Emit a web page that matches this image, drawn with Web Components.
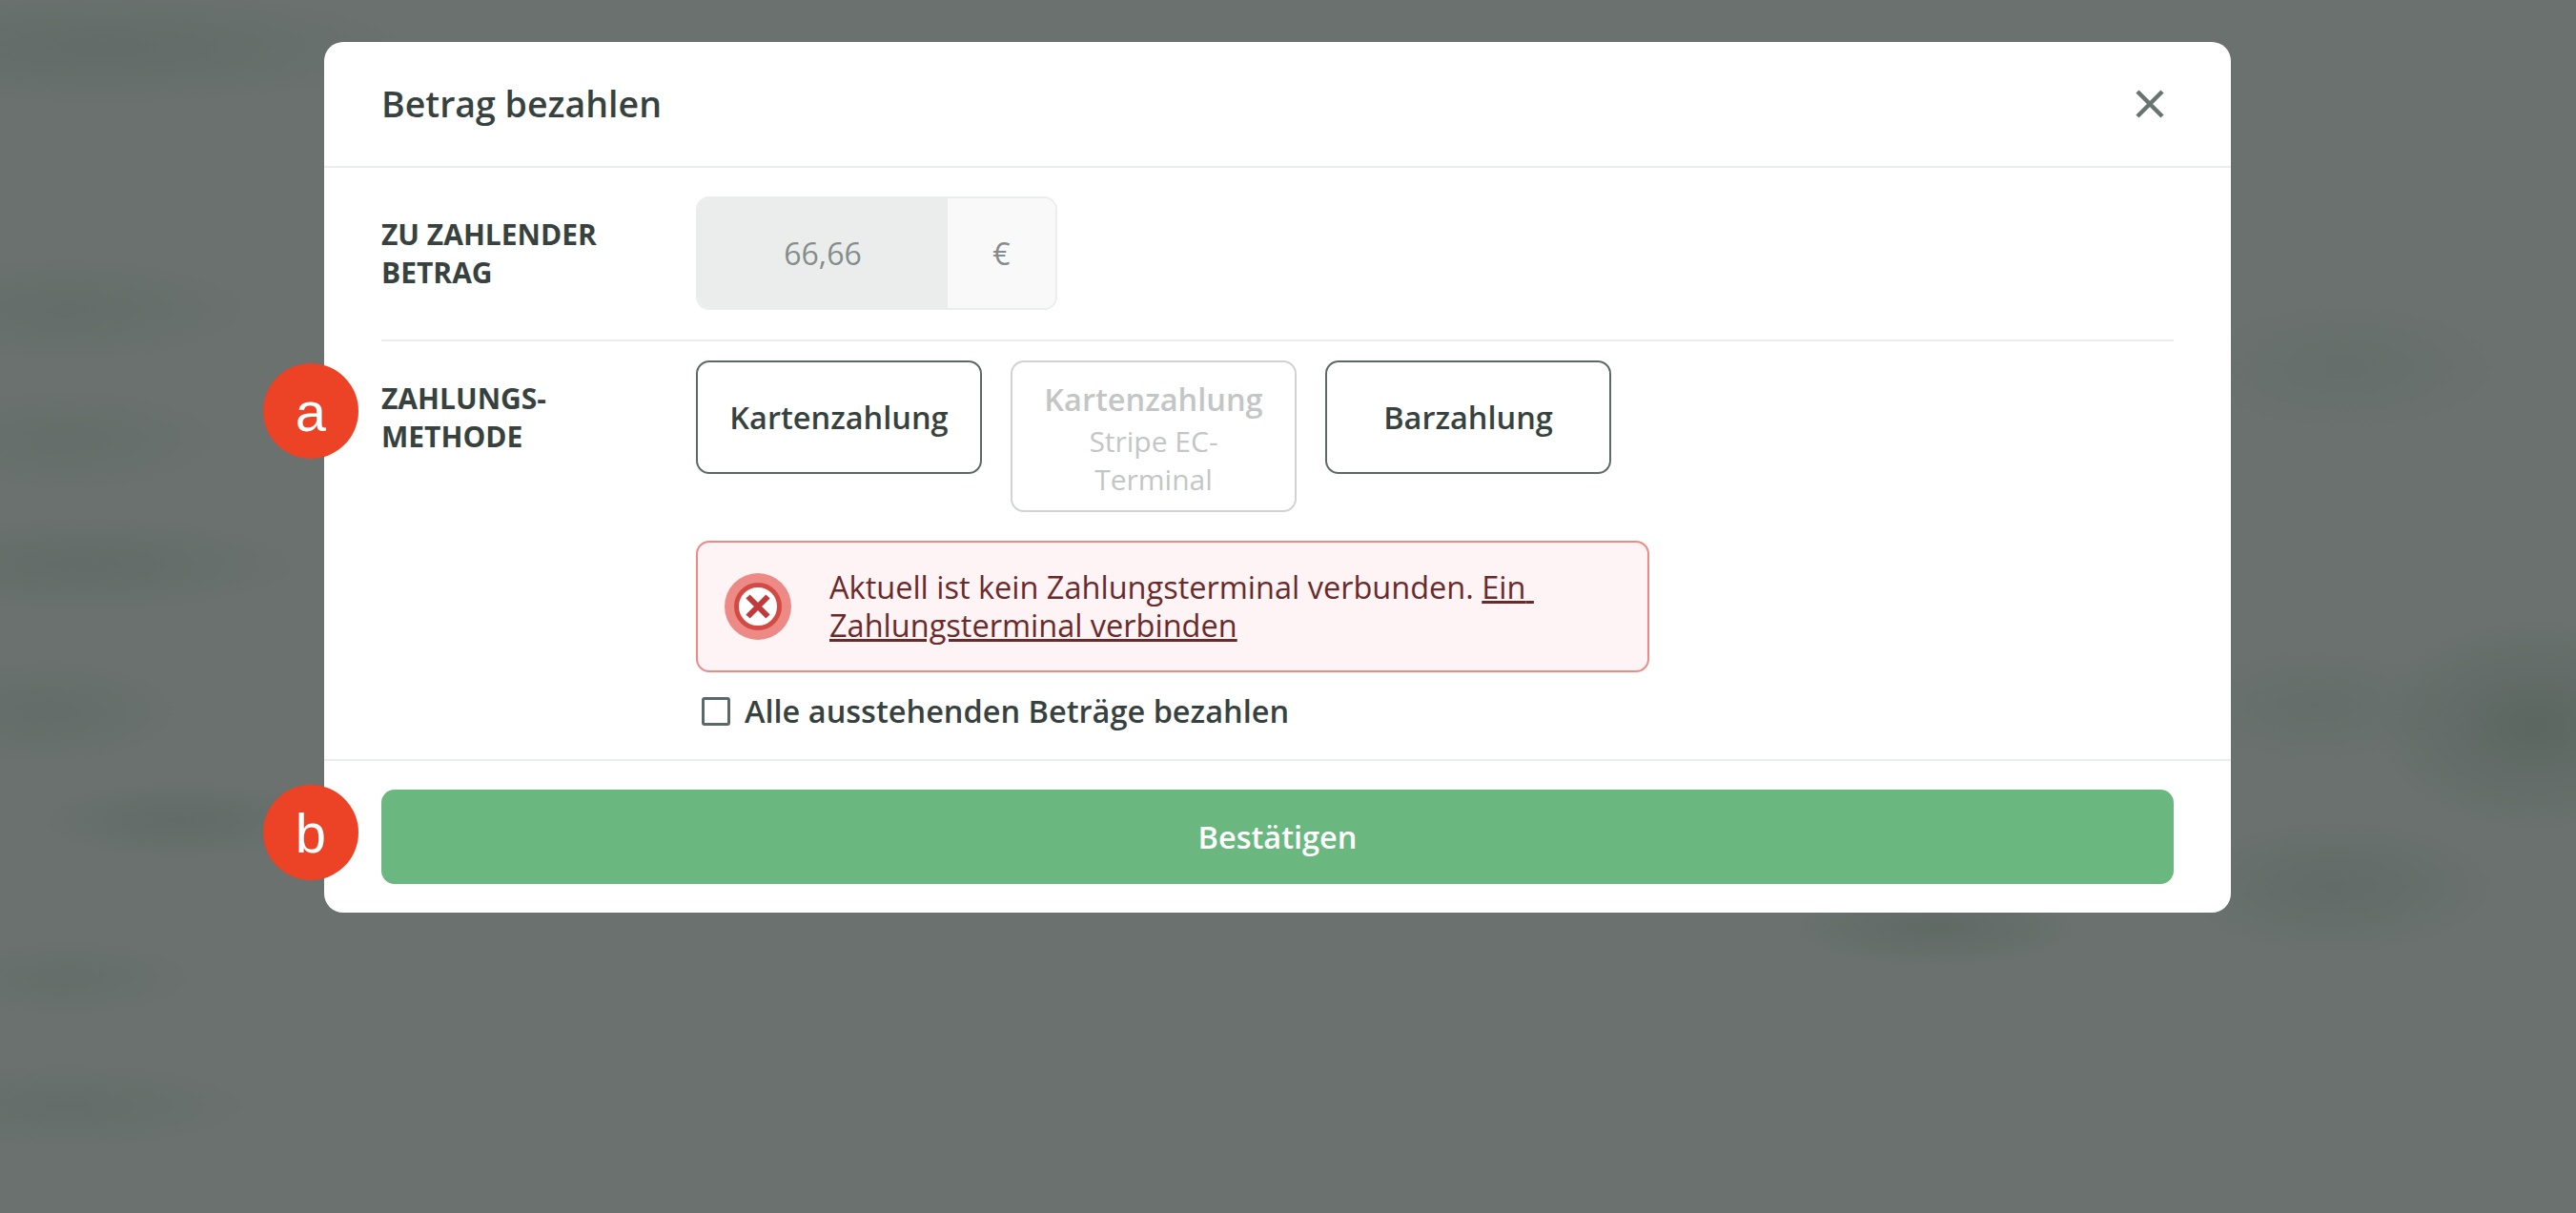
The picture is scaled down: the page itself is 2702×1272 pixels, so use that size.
<!DOCTYPE html>
<html lang="de">
<head>
<meta charset="utf-8">
<title>Betrag bezahlen</title>
<style>
  html, body { margin: 0; height: 100%; }
  body { font-family: 'Open Sans', 'Liberation Sans', sans-serif; overflow: hidden; }
</style>
</head>
<body>
<pay-backdrop>
  <pay-dialog heading="Betrag bezahlen">
    <form-row label="Zu zahlender Betrag" first>
      <amount-input value="66,66" unit="€"></amount-input>
    </form-row>
    <form-row label="Zahlungs-<br>methode">
      <div style="display:flex;gap:30px;align-items:flex-start">
        <method-button>Kartenzahlung</method-button>
        <method-button disabled sub="Stripe EC-Terminal">Kartenzahlung</method-button>
        <method-button>Barzahlung</method-button>
      </div>
      <error-alert>Aktuell ist kein Zahlungsterminal verbunden. <a href="#" style="white-space:pre-wrap">Ein Zahlungsterminal verbinden</a></error-alert>
      <check-box>Alle ausstehenden Beträge bezahlen</check-box>
    </form-row>
    <primary-button slot="footer">Bestätigen</primary-button>
    <call-out slot="overlay" style="top:337px">a</call-out>
    <call-out slot="overlay" style="top:779px">b</call-out>
  </pay-dialog>
</pay-backdrop>

<script>
function define(name, html, setup) {
  customElements.define(name, class extends HTMLElement {
    connectedCallback() {
      if (this.shadowRoot) return;
      let root = this.attachShadow({ mode: 'open' });
      root.innerHTML = html;
      if (setup) setup(this, root);
    }
  });
}

define('pay-backdrop', `
<style>
  :host {
    display: block;
    height: 1272px;
    padding: 44px 0 0 340px;
    box-sizing: border-box;
    background-color: #6a716e;
    background-image:
      radial-gradient(ellipse 170px 110px at 2660px 760px, rgba(88,100,94,.8), transparent),
      radial-gradient(ellipse 170px 70px at 2450px 930px, rgba(90,101,96,.5), transparent),
      radial-gradient(ellipse 150px 60px at 2430px 740px, rgba(92,103,98,.35), transparent),
      radial-gradient(ellipse 170px 70px at 2460px 385px, rgba(92,103,98,.3), transparent),
      radial-gradient(ellipse 150px 40px at 2030px 973px, rgba(88,100,94,.6), transparent),
      radial-gradient(ellipse 330px 60px at 110px 50px, rgba(90,101,96,.45), transparent),
      radial-gradient(ellipse 200px 55px at 70px 325px, rgba(92,103,98,.4), transparent),
      radial-gradient(ellipse 170px 55px at 70px 462px, rgba(92,103,98,.35), transparent),
      radial-gradient(ellipse 230px 50px at 90px 592px, rgba(90,101,96,.45), transparent),
      radial-gradient(ellipse 140px 55px at 50px 746px, rgba(92,103,98,.45), transparent),
      radial-gradient(ellipse 150px 40px at 190px 860px, rgba(90,101,96,.5), transparent),
      radial-gradient(ellipse 140px 40px at 70px 1026px, rgba(92,103,98,.35), transparent),
      radial-gradient(ellipse 200px 45px at 70px 1160px, rgba(92,103,98,.4), transparent);
  }
</style>
<slot></slot>`);

define('pay-dialog', `
<style>
  :host {
    display: block;
    position: relative;
    width: 2000px;
    background: #fff;
    border-radius: 20px;
    color: #37423f;
  }
  .head {
    display: flex;
    align-items: center;
    justify-content: space-between;
    height: 130px;
    padding: 0 60px;
    border-bottom: 2px solid #ebeded;
  }
  h2 { margin: 0; font-size: 37.5px; font-weight: 600; line-height: 48px; }
  svg { display: block; margin-right: 9px; }
  .foot { padding: 30px 60px; border-top: 2px solid #ebeded; }
</style>
<div class="head">
  <h2></h2>
  <svg width="32" height="32" viewBox="0 0 32 32"><path d="M3 3 L29 29 M29 3 L3 29" stroke="#667570" stroke-width="4.5" fill="none"/></svg>
</div>
<div><slot></slot></div>
<div class="foot"><slot name="footer"></slot></div>
<slot name="overlay"></slot>`, (el, root) => {
  root.querySelector('h2').textContent = el.getAttribute('heading');
});

define('form-row', `
<style>
  :host { display: block; margin: 0 60px; }
  :host([first]) { border-bottom: 2px solid #ebeded; }
  .row { display: flex; padding: 20px 0 26px; }
  :host([first]) .row { padding: 30px 0 31px; }
  .label {
    width: 330px;
    flex: none;
    box-sizing: border-box;
    padding: 20px 30px 0 0;
    font-size: 30px;
    line-height: 40px;
    font-weight: 700;
    text-transform: uppercase;
  }
  .body { flex: 1; }
</style>
<div class="row">
  <div class="label"></div>
  <div class="body"><slot></slot></div>
</div>`, (el, root) => {
  root.querySelector('.label').innerHTML = el.getAttribute('label');
});

define('amount-input', `
<style>
  :host {
    display: flex;
    width: 379px;
    height: 119px;
    box-sizing: border-box;
    border: 2px solid #ebeded;
    border-radius: 14px;
    overflow: hidden;
    font-size: 32px;
    color: #848d8a;
  }
  div { display: flex; align-items: center; justify-content: center; }
  .val { width: 262px; background: #ebeded; }
  .unit { flex: 1; background: #f9f9f9; }
</style>
<div class="val"></div><div class="unit"></div>`, (el, root) => {
  root.querySelector('.val').textContent = el.getAttribute('value');
  root.querySelector('.unit').textContent = el.getAttribute('unit');
});

define('method-button', `
<style>
  :host {
    display: flex;
    flex-direction: column;
    align-items: center;
    justify-content: center;
    box-sizing: border-box;
    width: 300px;
    min-height: 119px;
    padding: 0 30px;
    border: 2px solid #5d6966;
    border-radius: 14px;
    font-size: 32.5px;
    line-height: 40px;
    font-weight: 600;
    color: #37423f;
    text-align: center;
  }
  :host([disabled]) {
    border-color: #d1d3d3;
    color: #c3c6c5;
    justify-content: flex-start;
    padding: 19px 30px 0;
    height: 159px;
  }
  .sub { font-size: 30px; font-weight: 400; margin-top: 4px; }
  .sub:empty { display: none; }
</style>
<slot></slot><div class="sub"></div>`, (el, root) => {
  root.querySelector('.sub').textContent = el.getAttribute('sub') || '';
});

define('error-alert', `
<style>
  :host {
    display: flex;
    align-items: center;
    box-sizing: border-box;
    width: 1000px;
    height: 138px;
    margin-top: 30px;
    padding: 0 28px;
    gap: 40px;
    background: #fef4f5;
    border: 2px solid #ee8a85;
    border-radius: 14px;
    font-size: 32.5px;
    line-height: 40px;
    color: #6b2a2a;
  }
  svg { flex: none; }
  ::slotted(a) { color: inherit; }
</style>
<svg width="70" height="70" viewBox="0 0 70 70">
  <circle cx="35" cy="35" r="35" fill="#ee8a85"/>
  <circle cx="35" cy="35" r="22.5" fill="#fff" stroke="#d34a45" stroke-width="5"/>
  <path d="M24.5 24.5 L45.5 45.5 M45.5 24.5 L24.5 45.5" stroke="#bf3a3a" stroke-width="6" fill="none"/>
</svg>
<div><slot></slot></div>`);

define('check-box', `
<style>
  :host {
    display: flex;
    align-items: center;
    margin-top: 17px;
    padding-left: 6px;
    gap: 15px;
    font-size: 32.5px;
    line-height: 48px;
    font-weight: 600;
    color: #37423f;
  }
  i { width: 30px; height: 30px; box-sizing: border-box; border: 3px solid #5d6966; border-radius: 3px; }
</style>
<i></i><slot></slot>`);

define('primary-button', `
<style>
  :host {
    display: flex;
    align-items: center;
    justify-content: center;
    height: 99px;
    background: #6ab87f;
    border-radius: 14px;
    color: #fff;
    font-size: 32.5px;
    font-weight: 600;
  }
</style>
<slot></slot>`);

define('call-out', `
<style>
  :host {
    position: absolute;
    left: -64px;
    width: 100px;
    height: 100px;
    display: flex;
    align-items: center;
    justify-content: center;
    border-radius: 50%;
    background: #ec4226;
    color: #fff;
    font-family: 'Liberation Sans', sans-serif;
    font-size: 58px;
  }
</style>
<slot></slot>`);
</script>
</body>
</html>
